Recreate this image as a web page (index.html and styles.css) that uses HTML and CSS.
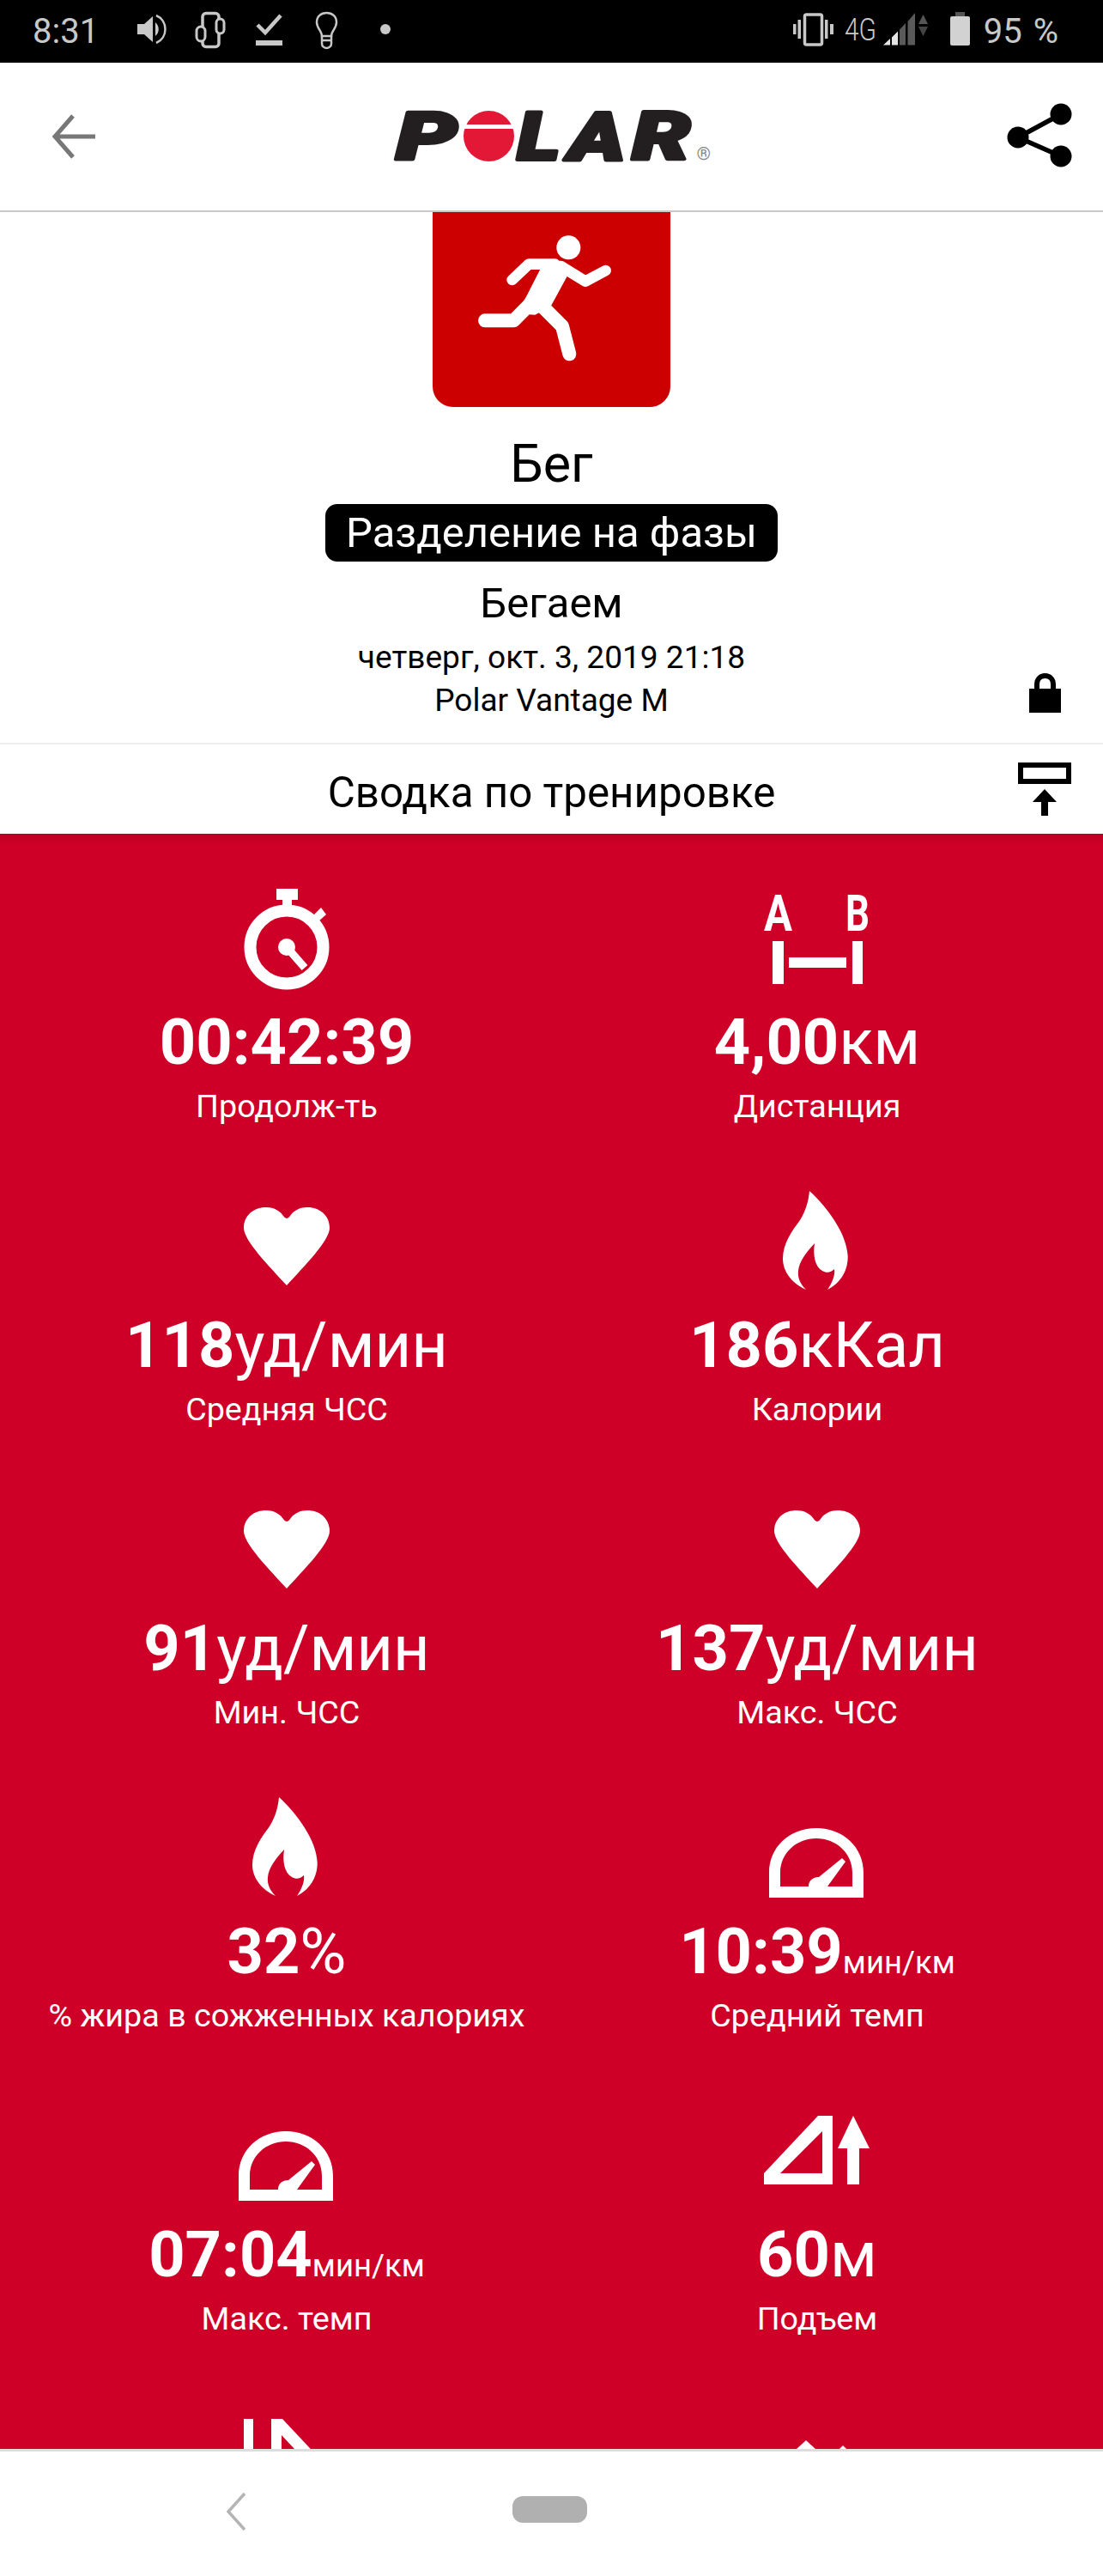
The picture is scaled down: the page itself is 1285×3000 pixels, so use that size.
FILE: index.html
```html
<!DOCTYPE html>
<html lang="ru">
<head>
<meta charset="utf-8">
<title>Polar Flow</title>
<link rel="stylesheet" href="styles.css">
</head>
<body>
<svg class="defs" width="0" height="0" aria-hidden="true">
  <symbol id="i-heart" viewBox="0 0 130 130"><path d="M65 114C45 92 15 62 15 47C15 33 26 23 41 23C51 23 58 28 61 33Q63 36 65 36Q67 36 69 33C72 28 79 23 89 23C104 23 115 33 115 47C115 62 85 92 65 114Z"/></symbol>
  <symbol id="i-flame" viewBox="0 0 130 130"><path d="M56 4C78 24 100 55 100.700 80C101 98 91 112 77 119C83 110 86 102 85 95C81 99 76 100 71 97C62 92 60 78 62 65C52 76 44 86 43 97C42 106 46 113 52 119C36 112 25 98 25 83C25 65 36 50 45 38C52 27 55 15 56 4Z"/></symbol>
  <symbol id="i-gauge" viewBox="0 0 130 130"><path fill-rule="evenodd" d="M9 121V92C9 62 33 40 64 40C95 40 119 62 119 92V121ZM22 108H55C55 101 60 97 67 97L94 75L98 79L77 108H106V92C106 69 87 52 64 52C41 52 22 69 22 92Z"/></symbol>
</svg>

<header class="statusbar">
  <span class="status-time">8:31</span>
  <svg class="status-left" width="295" height="73" viewBox="160 0 295 73">
    <g fill="#c8c8c8">
      <path d="M160 28H168L178 19V49L168 40H160Z"/>
      <path d="M181 26C186 30 186 38 181 42Z"/>
    </g>
    <g fill="none" stroke="#c8c8c8" stroke-width="2.500">
      <path d="M182 18C196 24 196 44 182 50"/>
      <rect x="236" y="15.500" width="19" height="39" rx="4" stroke-width="3.500"/>
      <rect x="229" y="31" width="10" height="17" rx="5" fill="#000" stroke-width="3"/>
      <rect x="252" y="22" width="9" height="17" rx="4.500" fill="#000" stroke-width="3"/>
      <path d="M300 29L309 38L327 18" stroke-width="4.500"/>
      <path d="M298 50H329" stroke-width="6"/>
      <path d="M375 42C375 36 369 33 369 26C369 19 374 15 380.500 15C387 15 392 19 392 26C392 33 386 36 386 42H375Z"/>
      <path d="M375 42V51C375 54 378 56 380.500 56C383 56 386 54 386 51V42M375 47H386"/>
    </g>
    <circle cx="449" cy="34" r="6" fill="#c8c8c8"/>
  </svg>
  <svg class="status-right" width="212" height="73" viewBox="922 0 212 73">
    <g fill="#c8c8c8">
      <rect x="923" y="28" width="3.500" height="12"/>
      <rect x="928.500" y="23" width="3.500" height="22"/>
      <rect x="960" y="23" width="3.500" height="22"/>
      <rect x="966" y="28" width="4" height="12"/>
      <text class="status-net" x="983" y="47" textLength="37" lengthAdjust="spacingAndGlyphs">4G</text>
      <path d="M1028 52.500L1036 45V52.500ZM1038 43.500L1045 36.500V52.500H1038Z" fill="#e4e4e4"/>
      <path d="M1047 34.500L1054 27V52.500H1047ZM1056.500 25L1065 15V52.500H1056.500Z" fill="#5a5a5a"/>
      <path d="M1074.500 17L1080 28H1069Z" fill="#555"/>
      <path d="M1069 31H1080L1074.500 42Z" fill="#444"/>
      <rect x="1112" y="14" width="11" height="6" fill="#555"/>
      <rect x="1106" y="19" width="23" height="34" rx="2" fill="#d2d2d2"/>
    </g>
    <rect x="936.500" y="17" width="20" height="35" rx="2" fill="none" stroke="#c8c8c8" stroke-width="3.500"/>
  </svg>
  <span class="status-battery">95 %</span>
</header>

<nav class="appbar">
  <svg class="nav-back" width="60" height="60" viewBox="60 130 60 60">
    <path d="M111 160H64M85 136L64 160L85 184" fill="none" stroke="#777" stroke-width="5"/>
  </svg>
  <svg class="logo" width="380" height="100" viewBox="452.500 110 380 100" role="img" aria-label="Polar">
    <g class="logo-letters">
      <text x="461" y="187" textLength="71" lengthAdjust="spacingAndGlyphs">P</text>
      <text x="602" y="187" textLength="50" lengthAdjust="spacingAndGlyphs">L</text>
      <text x="662" y="187" textLength="66" lengthAdjust="spacingAndGlyphs">A</text>
      <text x="736" y="187" textLength="68" lengthAdjust="spacingAndGlyphs">R</text>
    </g>
    <circle cx="569" cy="159.500" r="29.500" fill="#e31837"/>
    <rect x="535" y="146" width="70" height="5" fill="#fff"/>
    <text class="logo-reg" x="811" y="187">®</text>
  </svg>
  <svg class="nav-share" width="80" height="80" viewBox="1170 120 80 80">
    <path d="M1236 134L1186 161L1236 183" fill="none" stroke="#000" stroke-width="5.500"/>
    <circle cx="1236" cy="134" r="12.500"/>
    <circle cx="1186" cy="161" r="12.500"/>
    <circle cx="1236" cy="183" r="12.500"/>
  </svg>
</nav>

<main class="content">
  <section class="summary">
    <div class="tile">
      <svg width="277" height="227" viewBox="-78 -24 831 681">
        <circle cx="397" cy="100" r="42" fill="#fff"/>
        <g fill="none" stroke="#fff" stroke-linecap="round" stroke-linejoin="round">
          <path d="M200 213L258 158H350" stroke-width="38"/>
          <path d="M370 165L456 218L527 180" stroke-width="38"/>
          <path d="M105 355H205L270 290" stroke-width="48"/>
          <path d="M300 300L375 375L400 472" stroke-width="48"/>
        </g>
        <path d="M300 172L250 270L215 330L280 335L335 305L395 195L350 140H260Z" fill="#fff"/>
      </svg>
    </div>
    <h1 class="sport">Бег</h1>
    <div class="phase">Разделение на фазы</div>
    <div class="session-name">Бегаем</div>
    <div class="session-date">четверг, окт. 3, 2019 21:18</div>
    <div class="device-row">
      <span class="device-name">Polar Vantage M</span>
      <svg class="lock" width="37" height="46" viewBox="0 0 37 46">
        <path d="M0 18H37V46H0Z"/>
        <path d="M9 20V13C9 7 13 3 18.500 3C24 3 28 7 28 13V20" fill="none" stroke="#000" stroke-width="6"/>
      </svg>
    </div>
  </section>

  <div class="summary-bar">
    <span class="summary-title">Сводка по тренировке</span>
    <svg class="export" width="62" height="62" viewBox="0 0 62 62">
      <rect x="3" y="3" width="56" height="19" fill="none" stroke="#000" stroke-width="6"/>
      <path d="M31 31L45 46H35V62H27V46H17Z"/>
    </svg>
  </div>

  <section class="stats">
    <article class="stat">
      <svg class="stat-icon" width="130" height="130" viewBox="0 0 130 130">
        <path d="M53 5H78V18H71V30H60V18H53Z"/>
        <path d="M96 36L105 27L111 35L102 43Z"/>
        <circle cx="65" cy="73" r="42.500" fill="none" stroke="#fff" stroke-width="14"/>
        <circle cx="65" cy="73" r="10"/>
        <path d="M65 73L86 97" fill="none" stroke="#fff" stroke-width="9"/>
      </svg>
      <div class="stat-value">00:42:39</div>
      <div class="stat-label">Продолж-ть</div>
    </article>
    <article class="stat">
      <svg class="stat-icon" width="130" height="130" viewBox="0 0 130 130">
        <text class="ab" x="3" y="54" textLength="33" lengthAdjust="spacingAndGlyphs">A</text>
        <text class="ab" x="98" y="54" textLength="28" lengthAdjust="spacingAndGlyphs">B</text>
        <rect x="13" y="66" width="13" height="50"/>
        <rect x="106" y="66" width="12" height="50"/>
        <rect x="32" y="85" width="67" height="12"/>
      </svg>
      <div class="stat-value">4,00<span class="unit">км</span></div>
      <div class="stat-label">Дистанция</div>
    </article>
    <article class="stat">
      <svg class="stat-icon" width="130" height="130"><use href="#i-heart"/></svg>
      <div class="stat-value">118<span class="unit">уд/мин</span></div>
      <div class="stat-label">Средняя ЧСС</div>
    </article>
    <article class="stat">
      <svg class="stat-icon" width="130" height="130"><use href="#i-flame"/></svg>
      <div class="stat-value">186<span class="unit">кКал</span></div>
      <div class="stat-label">Калории</div>
    </article>
    <article class="stat">
      <svg class="stat-icon" width="130" height="130"><use href="#i-heart"/></svg>
      <div class="stat-value">91<span class="unit">уд/мин</span></div>
      <div class="stat-label">Мин. ЧСС</div>
    </article>
    <article class="stat">
      <svg class="stat-icon" width="130" height="130"><use href="#i-heart"/></svg>
      <div class="stat-value">137<span class="unit">уд/мин</span></div>
      <div class="stat-label">Макс. ЧСС</div>
    </article>
    <article class="stat">
      <svg class="stat-icon" width="130" height="130"><use href="#i-flame"/></svg>
      <div class="stat-value">32<span class="unit">%</span></div>
      <div class="stat-label">% жира в сожженных калориях</div>
    </article>
    <article class="stat">
      <svg class="stat-icon" width="130" height="130"><use href="#i-gauge"/></svg>
      <div class="stat-value">10:39<span class="unit-small">мин/км</span></div>
      <div class="stat-label">Средний темп</div>
    </article>
    <article class="stat">
      <svg class="stat-icon" width="130" height="130"><use href="#i-gauge"/></svg>
      <div class="stat-value">07:04<span class="unit-small">мин/км</span></div>
      <div class="stat-label">Макс. темп</div>
    </article>
    <article class="stat">
      <svg class="stat-icon" width="130" height="130" viewBox="0 0 130 130">
        <path fill-rule="evenodd" d="M3 89L66 22H83V102H3ZM22 89H71V40Z"/>
        <path d="M107 22L126 60H114V102H100V60H89Z"/>
      </svg>
      <div class="stat-value">60<span class="unit">м</span></div>
      <div class="stat-label">Подъем</div>
    </article>
    <article class="stat">
      <svg class="stat-icon" width="130" height="130" viewBox="0 0 130 130">
        <rect x="15" y="22" width="11" height="100"/>
        <path fill-rule="evenodd" d="M47 22H60L135 102H47ZM59 41V90H105Z"/>
      </svg>
    </article>
    <article class="stat">
      <svg class="stat-icon" width="130" height="130" viewBox="0 0 130 130">
        <path d="M52 47L96 87H8Z"/>
        <path d="M95 53L130 87H60Z"/>
      </svg>
    </article>
  </section>
</main>

<footer class="navbar">
  <svg class="nav-chevron" width="24" height="46" viewBox="0 0 24 46">
    <path d="M22 2L3 23L22 44" fill="none" stroke="#b4b4b4" stroke-width="3.500"/>
  </svg>
  <div class="nav-home"></div>
</footer>
</body>
</html>
```

FILE: styles.css
```css
* { box-sizing: border-box; }

html, body {
  margin: 0;
  padding: 0;
}

body {
  width: 1285px;
  height: 3000px;
  display: flex;
  flex-direction: column;
  overflow: hidden;
  background: #fff;
  color: #000;
  font-family: Roboto, "Noto Sans", sans-serif;
}

svg { display: block; flex: none; }
.defs { position: absolute; }

/* status bar */
.statusbar {
  flex: none;
  height: 73px;
  background: #000;
  color: #c8c8c8;
  display: flex;
  align-items: center;
  padding: 0 52px 0 38px;
}
.status-time { font-size: 40px; line-height: 73px; }
.status-left { margin-left: 45px; }
.status-right { margin-left: auto; }
.status-battery { margin-left: 11px; font-size: 40px; line-height: 73px; word-spacing: 3px; }
.status-net { font-size: 36px; font-family: Roboto, sans-serif; font-weight: 300; }

/* app bar */
.appbar {
  flex: none;
  height: 174px;
  border-bottom: 2px solid #c9c9c9;
  display: grid;
  grid-template-columns: 1fr auto 1fr;
  align-items: center;
  background: #fff;
}
.nav-back { margin-left: 60px; }
.nav-share { justify-self: end; margin-right: 35px; }
.logo-letters text {
  font-family: Roboto, sans-serif;
  font-size: 78px;
  font-weight: 900;
  font-style: italic;
  fill: #231f20;
  stroke: #231f20;
  stroke-width: 4px;
  stroke-linejoin: round;
}
.logo-reg { font-size: 21px; fill: #888; font-family: Roboto, sans-serif; }

/* content */
.content {
  flex: 1;
  min-height: 0;
  overflow: hidden;
}
.summary {
  display: flex;
  flex-direction: column;
  align-items: center;
  text-align: center;
  height: 620px;
  border-bottom: 2px solid #eee;
}
.tile {
  width: 277px;
  height: 227px;
  background: #cc0000;
  border-radius: 0 0 24px 24px;
}
.sport {
  margin: 33px 0 0;
  font-size: 61px;
  line-height: 66px;
  font-weight: 400;
}
.phase {
  margin-top: 14px;
  width: 527px;
  height: 67px;
  background: #000;
  color: #fff;
  border-radius: 14px;
  font-size: 49px;
  line-height: 67px;
}
.session-name {
  margin-top: 19px;
  font-size: 49px;
  line-height: 60px;
}
.session-date {
  margin-top: 8px;
  font-size: 37.100px;
  line-height: 50px;
}
.device-row {
  width: 100%;
  display: grid;
  grid-template-columns: 1fr auto 1fr;
}
.device-name {
  grid-column: 2;
  font-size: 37px;
  line-height: 50px;
}
.lock {
  grid-column: 3;
  justify-self: end;
  margin: -7px 49px 0 0;
}
.summary-bar {
  height: 104px;
  display: grid;
  grid-template-columns: 1fr auto 1fr;
  align-items: center;
  background: #fff;
}
.summary-title {
  grid-column: 2;
  font-size: 49.300px;
  line-height: 60px;
  padding-top: 8px;
}
.export {
  grid-column: 3;
  justify-self: end;
  margin-right: 37px;
}

/* stats */
.stats {
  padding: 59px 24px 0 25px;
  height: 2400px;
  background: linear-gradient(#b70023 0, #cf0028 12px);
  color: #fff;
  display: grid;
  grid-template-columns: 618px 618px;
  grid-auto-rows: 353px;
}
.stat {
  display: flex;
  flex-direction: column;
  align-items: center;
  text-align: center;
}
.stat-icon { fill: #fff; overflow: visible; }
.ab { font-family: Roboto, sans-serif; font-size: 60px; font-weight: 700; }
.stat-value {
  margin-top: 11px;
  font-size: 74px;
  line-height: 86px;
  font-weight: 700;
  white-space: nowrap;
}
.unit { font-weight: 400; }
.unit-small { font-weight: 400; font-size: 36.500px; line-height: 1; }
.stat-label {
  margin-top: 9px;
  font-size: 37.700px;
  line-height: 44px;
}

/* bottom nav */
.navbar {
  flex: none;
  height: 148px;
  background: #fff;
  border-top: 3px solid #ddd;
  display: flex;
  align-items: flex-start;
  padding: 47px 0 0 263px;
}
.nav-home {
  width: 87px;
  height: 31px;
  margin: 5px 0 0 310px;
  background: #b0b0b0;
  border-radius: 12px;
}
```
